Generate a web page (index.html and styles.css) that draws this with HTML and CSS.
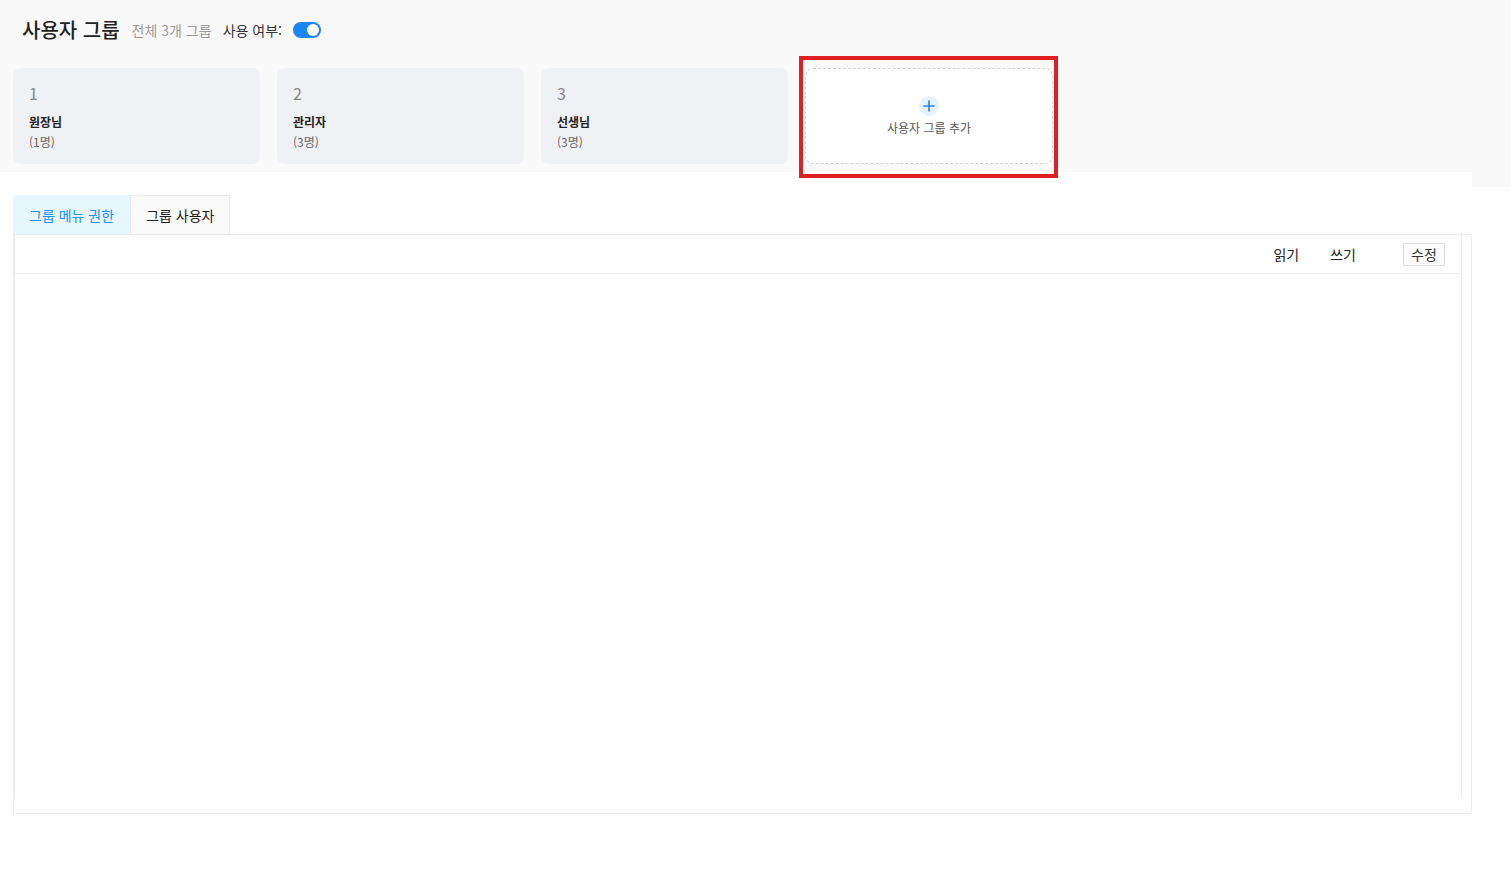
FILE: index.html
```html
<!DOCTYPE html>
<html lang="ko">
<head>
<meta charset="utf-8">
<title>사용자 그룹</title>
<link rel="stylesheet" href="styles.css">
</head>
<body>
<div class="page">
  <header class="top">
    <div class="title-row">
      <h1 class="title">사용자 그룹</h1>
      <span class="count">전체 3개 그룹</span>
      <span class="use-label">사용 여부:</span>
      <span class="toggle"><span class="knob"></span></span>
    </div>
    <div class="cards">
      <div class="card">
        <div class="card-no">1</div>
        <div class="card-name">원장님</div>
        <div class="card-cnt">(1명)</div>
      </div>
      <div class="card">
        <div class="card-no">2</div>
        <div class="card-name">관리자</div>
        <div class="card-cnt">(3명)</div>
      </div>
      <div class="card">
        <div class="card-no">3</div>
        <div class="card-name">선생님</div>
        <div class="card-cnt">(3명)</div>
      </div>
      <div class="add-card">
        <span class="plus">
          <svg width="12" height="12" viewBox="0 0 12 12"><path d="M6 1v10M1 6h10" stroke="#2f7fe8" stroke-width="1.6" stroke-linecap="round"/></svg>
        </span>
        <span class="add-text">사용자 그룹 추가</span>
        <span class="highlight"></span>
      </div>
    </div>
  </header>
  <section class="panel">
    <div class="tabs">
      <div class="tab active">그룹 메뉴 권한</div>
      <div class="tab">그룹 사용자</div>
    </div>
    <div class="tab-body">
      <div class="table">
        <div class="thead">
          <span class="th">읽기</span>
          <span class="th">쓰기</span>
          <span class="btn">수정</span>
        </div>
      </div>
    </div>
  </section>
</div>
</body>
</html>
```
FILE: styles.css
```css
* { box-sizing: border-box; }
html, body { margin: 0; padding: 0; }
body {
  font-family: "Noto Sans CJK KR", "Noto Sans", sans-serif;
  color: #222;
  background: #fff;
}
.page {
  width: 1511px;
  min-height: 875px;
  background: linear-gradient(#f9f9f9 0 187px, #fff 187px);
}
.top {
  height: 172px;
}
.title-row {
  display: flex;
  align-items: center;
  padding: 18px 0 0 22px;
  height: 42px;
}
.title {
  margin: 0;
  font-size: 20px;
  line-height: 24px;
  font-weight: 500;
  color: #222;
}
.count {
  margin-left: 12px;
  font-size: 14px;
  color: #999;
}
.use-label {
  margin-left: 11px;
  font-size: 14px;
  color: #333;
}
.toggle {
  margin-left: 11px;
  width: 28px;
  height: 16px;
  border-radius: 8px;
  background: #1a85f5;
  position: relative;
  display: inline-block;
}
.knob {
  position: absolute;
  right: 2px;
  top: 2px;
  width: 12px;
  height: 12px;
  border-radius: 50%;
  background: #fff;
}
.cards {
  display: flex;
  gap: 17px;
  padding: 26px 0 0 13px;
}
.card {
  width: 247px;
  height: 96px;
  border-radius: 8px;
  background: #f0f1f5;
  padding: 14px 16px 12px;
}
.card-no {
  font-size: 16px;
  line-height: 22px;
  color: #888;
}
.card-name {
  margin-top: 8px;
  font-size: 12px;
  line-height: 20px;
  font-weight: 700;
  color: #222;
}
.card-cnt {
  font-size: 12px;
  line-height: 20px;
  color: #666;
}
.add-card {
  position: relative;
  width: 248px;
  height: 96px;
  border: 1px dashed #d6d6d6;
  border-radius: 8px;
  background: #fff;
  display: flex;
  flex-direction: column;
  align-items: center;
  padding-top: 27px;
}
.plus {
  width: 20px;
  height: 20px;
  border-radius: 50%;
  background: #e6f2ff;
  display: flex;
  align-items: center;
  justify-content: center;
}
.add-text {
  margin-top: 3px;
  font-size: 12px;
  line-height: 18px;
  color: #555;
}
.highlight {
  position: absolute;
  top: -13px;
  left: -7px;
  right: -6px;
  bottom: -15px;
  border: 4px solid #e02020;
  pointer-events: none;
}
.panel {
  width: 1472px;
  background: #fff;
  padding: 23px 0 0 13px;
}
.tabs {
  display: flex;
  height: 39px;
}
.tab {
  padding: 0 15px;
  height: 39px;
  line-height: 39px;
  font-size: 14px;
  color: #222;
  background: #fafafa;
  border: 1px solid #ececec;
  border-bottom: none;
}
.tab.active {
  background: #e6f7ff;
  color: #1890ff;
  border-color: #e6f7ff;
}
.tab-body {
  height: 580px;
  border: 1px solid #ececec;
}
.table {
  width: 1448px;
  height: 563px;
  border-left: 1px solid #ececec;
  border-right: 1px solid #ececec;
}
.thead {
  height: 39px;
  display: flex;
  align-items: center;
  justify-content: flex-end;
  padding-right: 16px;
  border-bottom: 1px solid #ececec;
}
.th {
  font-size: 14px;
  color: #222;
  margin-right: 31px;
}
.th + .th { margin-right: 47px; }
.btn {
  width: 42px;
  height: 23px;
  border: 1px solid #d9d9d9;
  border-radius: 2px;
  font-size: 14px;
  line-height: 21px;
  text-align: center;
  color: #333;
}
```
